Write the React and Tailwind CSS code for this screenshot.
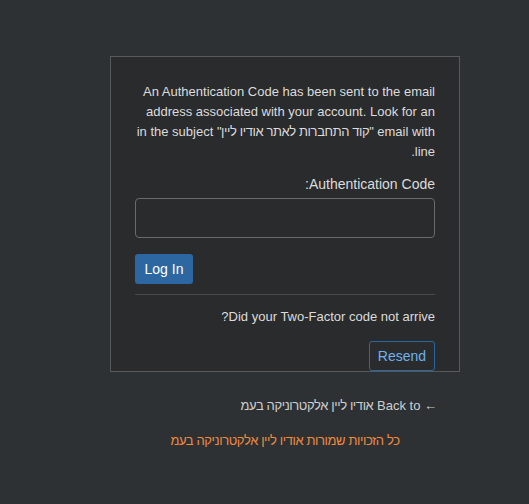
const He = ({ children }) => <span className="tracking-[-0.4px]">{children}</span>;

const App = () => {
  return (
    <div
      dir="rtl"
      className="min-h-[504px] bg-[#2d3134] pt-[56px] font-['Liberation_Sans',Arial,sans-serif]"
    >
      <div className="w-[350px] mr-[69px]">
        <div className="border border-[#58595b] bg-[#2a2b2d] px-[24px] pt-[25px] pb-0">
          <p className="ml-[-4px] text-[13px] leading-[20px] text-[#dcdcdc]">
            An Authentication Code has been sent to the email address associated with your account. Look for an email with <He>"קוד התחברות לאתר אודיו ליין"</He> in the subject line.
          </p>
          <label className="block mt-[12px] text-[14px] leading-[20px] text-[#dcdcdc]">
            Authentication Code:
          </label>
          <input
            type="text"
            className="mt-[4px] block w-full h-[40px] rounded-[4px] border border-[#6a6b6d] bg-[#2a2b2d] px-3 text-[14px] text-white outline-none"
          />
          <div className="mt-[16px] flex justify-end">
            <button className="h-[30px] w-[58px] rounded-[3px] bg-[#2d67a1] text-[14px] text-white">
              Log In
            </button>
          </div>
          <hr className="mt-[10px] border-t border-[#48494b]" />
          <p className="mt-[12px] text-[13px] leading-[20px] text-[#dcdcdc]">
            Did your Two-Factor code not arrive?
          </p>
          <div className="mt-[14px] flex">
            <button className="h-[30px] w-[66px] rounded-[3px] border border-[#2d67a1] bg-transparent text-[14px] text-[#6cb2ee]">
              Resend
            </button>
          </div>
        </div>
        <div className="mt-[24px] pr-[23px] text-[13px] leading-[20px] text-[#cfcfcf]">
          <a href="#">← Back to <He>אודיו ליין אלקטרוניקה בעמ</He></a>
        </div>
        <div className="mt-[15px] text-center text-[13px] leading-[20px] tracking-[-0.4px] text-[#f28a3c]">
          כל הזכויות שמורות אודיו ליין אלקטרוניקה בעמ
        </div>
      </div>
    </div>
  );
};

export default App;
